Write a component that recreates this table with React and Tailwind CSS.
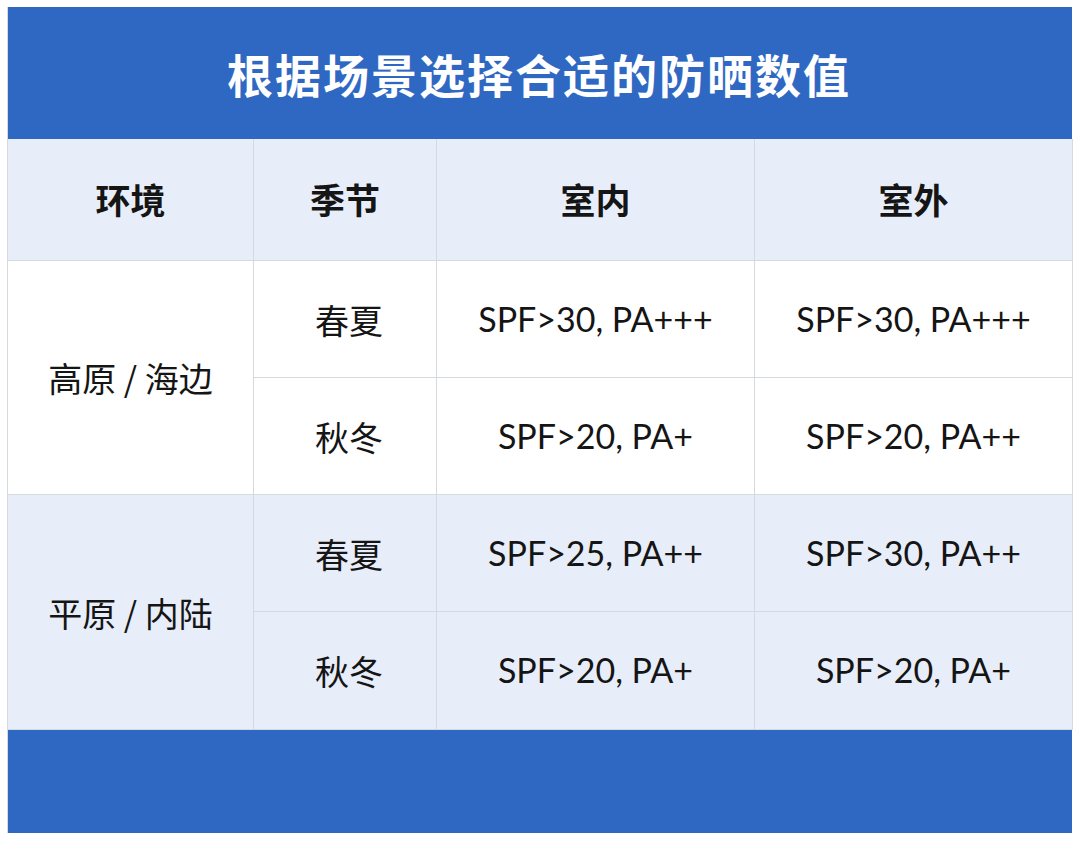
const cjk = { fontFamily: '"Noto Sans CJK SC", "Noto Sans", sans-serif' };
const latin = { fontFamily: '"Lato", "Noto Sans CJK SC", sans-serif' };

const Cell = ({ children, className = "", style }) => (
  <div
    className={`flex items-center justify-center border-r border-b border-[#d5d9e0] text-[#151515] ${className}`}
    style={style}
  >
    {children}
  </div>
);

const rows = [
  { env: "高原 / 海边", bg: "bg-white", items: [["春夏", "SPF>30, PA+++", "SPF>30, PA+++"], ["秋冬", "SPF>20, PA+", "SPF>20, PA++"]] },
  { env: "平原 / 内陆", bg: "bg-[#e8eef9]", items: [["春夏", "SPF>25, PA++", "SPF>30, PA++"], ["秋冬", "SPF>20, PA+", "SPF>20, PA+"]] },
];

export default function App() {
  return (
    <div className="w-[1080px] h-[843px] bg-white pt-[7px] pl-[7px]" style={cjk}>
      <div className="w-[1065px] border-l border-[#d5d9e0]">
        <div className="h-[132px] bg-[#2f68c2] flex items-center justify-center">
          <h1 className="text-white text-[46px] font-bold tracking-[2px] pr-[2px]" style={cjk}>
            根据场景选择合适的防晒数值
          </h1>
        </div>
        <div className="grid grid-cols-[246px_183px_318px_318px] grid-rows-[122px_117px_117px_117px_118px]">
          {["环境", "季节", "室内", "室外"].map((h) => (
            <Cell key={h} className="bg-[#e8eef9] text-[35px] font-bold">
              {h}
            </Cell>
          ))}
          {rows.map((r) => (
            <div key={r.env} className="contents">
              <Cell className={`${r.bg} row-span-2 text-[34px] whitespace-pre`}>{r.env}</Cell>
              {r.items.map(([season, inside, outside]) => (
                <div key={season} className="contents">
                  <Cell className={`${r.bg} text-[34px] pl-[8px]`}>{season}</Cell>
                  <Cell className={`${r.bg} text-[34px] pb-[2px]`} style={latin}>{inside}</Cell>
                  <Cell className={`${r.bg} text-[34px] pb-[2px]`} style={latin}>{outside}</Cell>
                </div>
              ))}
            </div>
          ))}
        </div>
        <div className="h-[103px] bg-[#2f68c2]" />
      </div>
    </div>
  );
}
